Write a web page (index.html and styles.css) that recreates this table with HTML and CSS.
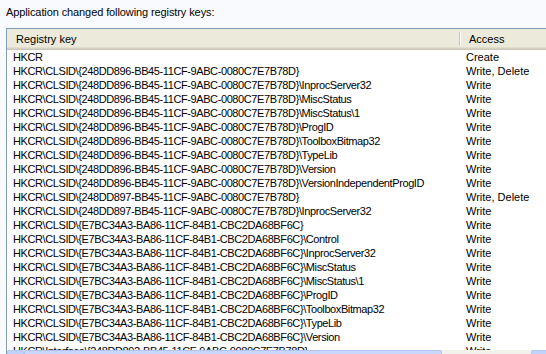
FILE: index.html
```html
<!DOCTYPE html>
<html>
<head>
<meta charset="utf-8">
<link rel="stylesheet" href="styles.css">
</head>
<body>
<div class="caption">Application changed following registry keys:</div>
<div class="list">
  <div class="header">
    <div class="hcell hkey">Registry key</div>
    <div class="hcell hacc">Access</div>
  </div>
  <div class="rows">
    <div class="row"><span class="key">HKCR</span><span class="acc">Create</span></div>
    <div class="row"><span class="key">HKCR\CLSID\{248DD896-BB45-11CF-9ABC-0080C7E7B78D}</span><span class="acc">Write, Delete</span></div>
    <div class="row"><span class="key">HKCR\CLSID\{248DD896-BB45-11CF-9ABC-0080C7E7B78D}\InprocServer32</span><span class="acc">Write</span></div>
    <div class="row"><span class="key">HKCR\CLSID\{248DD896-BB45-11CF-9ABC-0080C7E7B78D}\MiscStatus</span><span class="acc">Write</span></div>
    <div class="row"><span class="key">HKCR\CLSID\{248DD896-BB45-11CF-9ABC-0080C7E7B78D}\MiscStatus\1</span><span class="acc">Write</span></div>
    <div class="row"><span class="key">HKCR\CLSID\{248DD896-BB45-11CF-9ABC-0080C7E7B78D}\ProgID</span><span class="acc">Write</span></div>
    <div class="row"><span class="key">HKCR\CLSID\{248DD896-BB45-11CF-9ABC-0080C7E7B78D}\ToolboxBitmap32</span><span class="acc">Write</span></div>
    <div class="row"><span class="key">HKCR\CLSID\{248DD896-BB45-11CF-9ABC-0080C7E7B78D}\TypeLib</span><span class="acc">Write</span></div>
    <div class="row"><span class="key">HKCR\CLSID\{248DD896-BB45-11CF-9ABC-0080C7E7B78D}\Version</span><span class="acc">Write</span></div>
    <div class="row"><span class="key">HKCR\CLSID\{248DD896-BB45-11CF-9ABC-0080C7E7B78D}\VersionIndependentProgID</span><span class="acc">Write</span></div>
    <div class="row"><span class="key">HKCR\CLSID\{248DD897-BB45-11CF-9ABC-0080C7E7B78D}</span><span class="acc">Write, Delete</span></div>
    <div class="row"><span class="key">HKCR\CLSID\{248DD897-BB45-11CF-9ABC-0080C7E7B78D}\InprocServer32</span><span class="acc">Write</span></div>
    <div class="row"><span class="key">HKCR\CLSID\{E7BC34A3-BA86-11CF-84B1-CBC2DA68BF6C}</span><span class="acc">Write</span></div>
    <div class="row"><span class="key">HKCR\CLSID\{E7BC34A3-BA86-11CF-84B1-CBC2DA68BF6C}\Control</span><span class="acc">Write</span></div>
    <div class="row"><span class="key">HKCR\CLSID\{E7BC34A3-BA86-11CF-84B1-CBC2DA68BF6C}\InprocServer32</span><span class="acc">Write</span></div>
    <div class="row"><span class="key">HKCR\CLSID\{E7BC34A3-BA86-11CF-84B1-CBC2DA68BF6C}\MiscStatus</span><span class="acc">Write</span></div>
    <div class="row"><span class="key">HKCR\CLSID\{E7BC34A3-BA86-11CF-84B1-CBC2DA68BF6C}\MiscStatus\1</span><span class="acc">Write</span></div>
    <div class="row"><span class="key">HKCR\CLSID\{E7BC34A3-BA86-11CF-84B1-CBC2DA68BF6C}\ProgID</span><span class="acc">Write</span></div>
    <div class="row"><span class="key">HKCR\CLSID\{E7BC34A3-BA86-11CF-84B1-CBC2DA68BF6C}\ToolboxBitmap32</span><span class="acc">Write</span></div>
    <div class="row"><span class="key">HKCR\CLSID\{E7BC34A3-BA86-11CF-84B1-CBC2DA68BF6C}\TypeLib</span><span class="acc">Write</span></div>
    <div class="row"><span class="key">HKCR\CLSID\{E7BC34A3-BA86-11CF-84B1-CBC2DA68BF6C}\Version</span><span class="acc">Write</span></div>
    <div class="row"><span class="key">HKCR\Interface\{248DD892-BB45-11CF-9ABC-0080C7E7B78D}</span><span class="acc">Write</span></div>
  </div>
  <div class="hscroll">
    <div class="sbtn"></div>
    <div class="thumb"></div>
    <div class="track"></div>
    <div class="sbtn"></div>
  </div>
</div>
</body>
</html>
```

FILE: styles.css
```css
html, body {
  margin: 0;
  padding: 0;
  height: 100%;
  overflow: hidden;
}
body {
  background: #f9fafd;
  font-family: "Liberation Sans", Arial, sans-serif;
  font-size: 11px;
  color: #000;
}
.caption {
  height: 28px;
  box-sizing: border-box;
  padding: 6px 0 0 6px;
  line-height: 13px;
  letter-spacing: -0.1px;
}
.list {
  margin-left: 6px;
  width: 560px;
  height: 380px;
  background: #fff;
  border: 1px solid #7f9db9;
  display: flex;
  flex-direction: column;
}
.header {
  display: grid;
  grid-template-columns: 453px 1fr;
  height: 21px;
  box-sizing: border-box;
  background: #ebeadb;
  border-bottom: 1px solid #cbc7b8;
  box-shadow: inset 0 -1px 0 #d6d2c2, inset 0 -2px 0 #e2decd;
  flex: none;
}
.hcell {
  line-height: 20px;
  white-space: nowrap;
}
.hkey {
  padding-left: 9px;
  border-right: 1px solid #c7c5b2;
  box-shadow: 1px 0 0 #fff;
  margin: 3px 0 4px;
  line-height: 14px;
}
.hacc {
  padding-left: 9px;
}
.rows {
  height: 300px;
  overflow: hidden;
  flex: none;
}
.row {
  display: grid;
  grid-template-columns: 453px 1fr;
  height: 14px;
  line-height: 14px;
  white-space: nowrap;
}
.key {
  padding-left: 6px;
  overflow: hidden;
  letter-spacing: -0.4px;
}
.acc {
  padding-left: 6px;
}
.hscroll {
  display: flex;
  height: 17px;
  background: #f3f1ec;
  flex: none;
}
.sbtn {
  width: 17px;
  box-sizing: border-box;
  background: #c1d3fb;
  border: 1px solid #b4c8f6;
  border-radius: 2px;
}
.thumb {
  width: 418px;
  box-sizing: border-box;
  background: #c8d7fb;
  border: 1px solid #b0c4f3;
  border-radius: 2px;
}
.track {
  width: 89px;
}
```
